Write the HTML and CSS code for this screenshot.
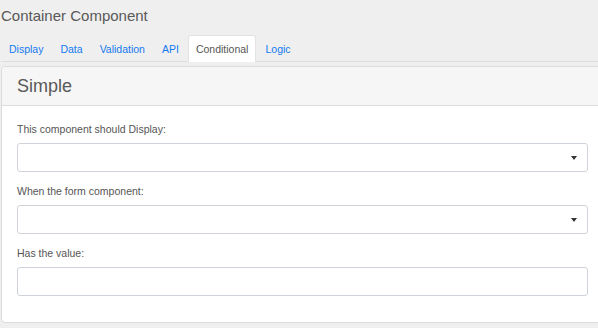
FILE: index.html
```html
<!DOCTYPE html>
<html lang="en">
<head>
    <meta charset="UTF-8">
    <meta name="viewport" content="width=device-width, initial-scale=1.0">
    <title>Container Component</title>
    <link rel="stylesheet" href="styles.css">
</head>
<body>
    <div class="page">
        <h4 class="title">Container Component</h4>

        <ul class="tabs">
            <li class="tab"><a href="#">Display</a></li>
            <li class="tab"><a href="#">Data</a></li>
            <li class="tab"><a href="#">Validation</a></li>
            <li class="tab"><a href="#">API</a></li>
            <li class="tab active"><a href="#">Conditional</a></li>
            <li class="tab"><a href="#">Logic</a></li>
        </ul>

        <div class="panel">
            <div class="panel-heading">
                <h3 class="panel-title">Simple</h3>
            </div>
            <div class="panel-body">
                <div class="form-group">
                    <label class="control-label">This component should Display:</label>
                    <div class="select-box"><span class="caret"></span></div>
                </div>
                <div class="form-group">
                    <label class="control-label">When the form component:</label>
                    <div class="select-box"><span class="caret"></span></div>
                </div>
                <div class="form-group">
                    <label class="control-label">Has the value:</label>
                    <input type="text" class="form-control">
                </div>
            </div>
        </div>
    </div>
</body>
</html>
```

FILE: styles.css
```css
html, body {
    overflow: hidden;
}
body {
    font-family: "Liberation Sans", Arial, sans-serif;
    background: #efefef;
    margin: 0;
    color: #555;
}
.page {
    width: 603px;
    padding-left: 1px;
}
.title {
    font-size: 15px;
    font-weight: normal;
    line-height: 20px;
    color: #595959;
    margin: 0;
    padding-top: 6px;
}
.tabs {
    list-style: none;
    margin: 9px 0 0 0;
    padding: 0;
    display: flex;
    border-bottom: 1px solid #dcdde3;
    height: 26px;
}
.tab {
    margin-right: 1px;
    margin-bottom: -1px;
}
.tab a {
    display: block;
    height: 26px;
    line-height: 26px;
    padding: 0 7px;
    font-size: 10.5px;
    color: #167af0;
    text-decoration: none;
    border: 1px solid transparent;
    border-bottom: none;
    border-radius: 3px 3px 0 0;
    box-sizing: border-box;
}
.tab.active a {
    background: #fff;
    color: #555;
    border-color: #e3e3e3;
    height: 27px;
}
.panel {
    margin-top: 4px;
    background: #fff;
    border: 1px solid #dcdcdc;
    border-radius: 4px;
}
.panel-heading {
    background: #f6f6f6;
    border-bottom: 1px solid #dcdcdc;
    border-radius: 4px 4px 0 0;
    padding: 0 15px;
    height: 38px;
    display: flex;
    align-items: center;
}
.panel-title {
    margin: 0;
    font-size: 18px;
    font-weight: normal;
    color: #595959;
}
.panel-body {
    padding: 16px 15px 14px;
}
.form-group {
    margin-bottom: 12px;
}
.control-label {
    display: block;
    font-size: 10.5px;
    line-height: 15px;
    margin-bottom: 6px;
    color: #555;
}
.select-box,
.form-control {
    display: flex;
    align-items: center;
    justify-content: flex-end;
    height: 29px;
    width: 100%;
    box-sizing: border-box;
    border: 1px solid #cfd4da;
    border-radius: 3px;
    background: #fff;
    padding: 0 10px;
    margin: 0;
}
.caret {
    width: 0;
    height: 0;
    border-left: 3px solid transparent;
    border-right: 3px solid transparent;
    border-top: 4px solid #333;
    margin-top: 1px;
}
```
